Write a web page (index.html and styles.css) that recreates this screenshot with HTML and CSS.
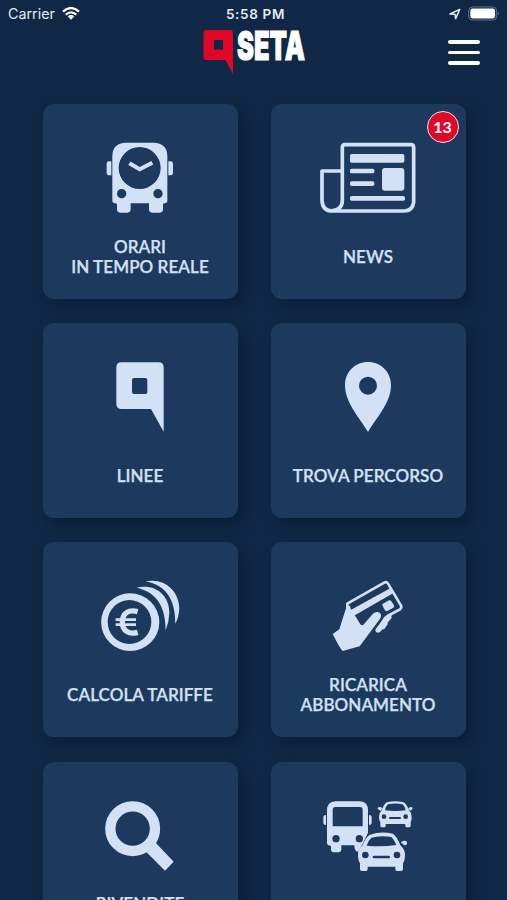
FILE: index.html
```html
<!DOCTYPE html>
<html lang="it">
<head>
<meta charset="utf-8">
<title>SETA</title>
<link rel="stylesheet" href="styles.css">
</head>
<body>
<div class="status">
  <div class="status-left"><span>Carrier</span>
    <svg class="wifi" viewBox="0 0 54 39"><path d="M3 14Q27 -8 51 14M11 23Q27 9 43 23" fill="none" stroke="#fff" stroke-width="6.5"/><path d="M17 28Q27 20 37 28L27 38Z" fill="#fff"/></svg>
  </div>
  <div class="time">5:58 PM</div>
  <div class="status-right">
    <svg class="arrow" viewBox="0 0 36 36"><path d="M3 18L32 4L20 32L18 19Z" fill="none" stroke="#e4eaf2" stroke-width="4.500" stroke-linejoin="round"/></svg>
    <svg class="battery" viewBox="0 0 98 44"><rect x="2" y="2" width="86" height="40" rx="12" fill="none" stroke="#66758c" stroke-width="3"/><rect x="7" y="7" width="76" height="30" rx="7" fill="#fff"/><path d="M92 16q5 6 0 12z" fill="#7d8ba0"/></svg>
  </div>
</div>
<header class="header">
  <svg class="logo" viewBox="0 0 102 46">
    <path fill="#e00726" fill-rule="evenodd" d="M3.5 1H27Q30 1 30 4V45L22.500 31H3.500Q.5 31 .5 28V4Q.5 1 3.500 1ZM11 11V20.500H20V11Z"/>
    <text class="wordmark" x="34" y="30.500" textLength="68" lengthAdjust="spacingAndGlyphs">SETA</text>
  </svg>
  <div class="menu"><i></i><i></i><i></i></div>
</header>
<main class="grid">
  <div class="card">
    <svg class="icon" viewBox="21 117 585 240">
      <path fill-rule="evenodd" d="M266 143H356Q394 146 394 184V318Q394 324 381 326V343Q381 353 371 353H349Q339 353 339 343V325H284V343Q284 353 274 353H253Q243 353 243 343V326Q229 324 229 318V184Q229 146 266 143ZM311 156A63 63 0 1 0 311 282A63 63 0 1 0 311 156ZM257 282A14 14 0 1 0 257 310A14 14 0 1 0 257 282ZM366 282A14 14 0 1 0 366 310A14 14 0 1 0 366 282Z"/>
      <path d="M226 199V241H219Q212 241 212 234V206Q212 199 219 199ZM397 199V241H404Q411 241 411 234V206Q411 199 404 199Z"/>
      <path class="line butt" stroke-width="12" d="M280 205L311 223L349 203"/>
    </svg>
    <div class="label">ORARI<br>IN TEMPO REALE</div>
  </div>
  <div class="card">
    <div class="badge">13</div>
    <svg class="icon" viewBox="27 117 585 240">
      <path class="line" stroke-width="11" d="M241 229V157Q241 149 249 149H447Q455 149 455 157V322Q452 348 427 348H212Q181 348 180 316V228H241V316Q241 344 212 347"/>
      <rect x="264" y="177" width="163" height="26" rx="5"/><rect x="264" y="221" width="73" height="14" rx="5"/><rect x="264" y="259" width="73" height="14" rx="5"/><rect x="360" y="219" width="67" height="68" rx="9"/><rect x="264" y="303" width="165" height="14" rx="5"/>
    </svg>
    <div class="label">NEWS</div>
  </div>
  <div class="card">
    <svg class="icon" viewBox="21 114 585 240"><path fill-rule="evenodd" d="M257 142H367Q383 142 383 158V350L345 282H257Q241 282 241 266V158Q241 142 257 142ZM294 189Q288 189 288 195V231Q288 237 294 237H328Q334 237 334 231V195Q334 189 328 189Z"/></svg>
    <div class="label">LINEE</div>
  </div>
  <div class="card">
    <svg class="icon" viewBox="27 114 585 240"><path fill-rule="evenodd" d="M318 141C279 141 249 171 249 211C249 262 290 305 318 351C346 305 387 262 387 211C387 171 357 141 318 141ZM318 185A27 27 0 1 1 318 239A27 27 0 1 1 318 185Z"/></svg>
    <div class="label">TROVA PERCORSO</div>
  </div>
  <div class="card">
    <svg class="icon" viewBox="21 112 585 240">
      <path fill-rule="evenodd" d="M282 176A86.500 86.500 0 1 0 282 349A88 86.500 0 1 0 282 176ZM280 196A66 66 0 1 1 280 328A65 66 0 1 1 280 196Z"/>
      <path d="M302 159C357 147 400 180 400 235Q399 263 389 287C389 225 369 174 302 159ZM329 140C384 129 430 167 430 223Q428 249 418 267C418 203 397 153 329 140Z"/>
      <path class="line butt" stroke-width="16" d="M305 231C278 223 259 236 259 262C259 288 278 301 305 293"/>
      <path class="line butt" stroke-width="8" d="M239 255H300M239 270H300"/>
    </svg>
    <div class="label">CALCOLA TARIFFE</div>
  </div>
  <div class="card">
    <svg class="icon" viewBox="27 112 585 240">
      <path class="line" stroke-width="8" d="M256 218V207L368 143Q373 140 378 147L417 213Q420 219 414 224L382 241"/>
      <path d="M258 216L380 153L393 176L276 243Z"/>
      <path class="cut" d="M264 210L374 147L382 162L266 226Z"/>
      <path d="M256 208L278 241L296 270L303 272L332 238Q343 228 354 235Q361 244 353 254L293 335L242 349Q234 342 212 298L232 284Z"/>
      <path d="M391 237Q386 244 389 250Q382 257 377 264Q379 270 372 275Q369 285 360 285Q352 298 343 293Q337 286 343 281Q354 267 366 248L377 239Z"/>
      <path d="M361 212Q359 209 363 207L381 197Q385 195 388 200L396 212Q398 216 394 219L376 229Q372 231 369 227Z"/>
    </svg>
    <div class="label">RICARICA<br>ABBONAMENTO</div>
  </div>
  <div class="card">
    <svg class="icon" viewBox="21 125 585 240"><circle cx="290" cy="235" r="67" fill="none" stroke="#d3e1f6" stroke-width="31"/><path d="M331 305L359 277L413 334L387 361Z"/></svg>
    <div class="label">RIVENDITE<br>&nbsp;</div>
  </div>
  <div class="card">
    <svg class="icon" viewBox="27 125 585 240">
      <path fill-rule="evenodd" d="M220 153H294Q318 155 318 180V247L300 285L288 304Q277 304 277 285H238V297Q238 306 229 306H215Q207 306 207 297V287Q195 285 195 278V180Q195 155 220 153ZM220 170Q212 170 212 179V228H302V179Q302 170 294 170ZM222 254A11 11 0 1 0 222 276A11 11 0 1 0 222 254ZM292 254A11 11 0 1 0 292 276A11 11 0 1 0 292 254Z"/>
      <path d="M192 194V224Q184 224 184 218V200Q184 194 192 194ZM321 194V224Q329 224 329 218V200Q329 194 321 194Z"/>
      <path fill-rule="evenodd" d="M324 253Q357 241 393 250Q404 257 416 286Q428 295 429 312Q429 330 423 339V357Q423 362 417 362H405Q400 362 400 357V349H317V357Q317 362 312 362H300Q294 362 294 357V339Q288 330 288 312Q288 295 301 286Q311 260 324 253ZM328 262Q318 271 314 286Q360 291 403 284Q395 266 388 260Q355 254 328 262ZM310 304A10 10 0 1 0 310 324A10 10 0 1 0 310 304ZM405 304A10 10 0 1 0 405 324A10 10 0 1 0 405 304ZM336 316Q332 316 332 320Q332 324 336 324H380Q384 324 384 320Q384 316 380 316Z"/>
      <path d="M416 277Q422 270 432 272Q438 277 433 284L426 285L423 280Z"/>
      <path fill-rule="evenodd" d="M374 156Q400 150 425 156Q434 162 441 180Q449 187 449 200Q449 211 446 216V226Q446 231 441 231H434Q430 231 430 226V221H371V226Q371 231 366 231H359Q355 231 355 226V216Q351 211 351 200Q351 187 359 180Q366 161 374 156ZM378 162Q371 168 369 180Q400 184 431 180Q428 167 422 162Q400 157 378 162ZM366 192A7 7 0 1 0 366 206A7 7 0 1 0 366 192ZM431 192A7 7 0 1 0 431 206A7 7 0 1 0 431 192ZM384 200Q381 200 381 203Q381 206 384 206H414Q417 206 417 203Q417 200 414 200Z"/>
      <path d="M361 174L356 181Q346 178 347 173Q350 168 357 171ZM439 174L444 181Q453 178 452 173Q449 168 443 171Z"/>
    </svg>
  </div>
</main>
</body>
</html>
```
FILE: styles.css
```css
* { box-sizing: border-box; }
html { overflow: hidden; }
body { margin: 0; height: 900px; overflow: hidden; background: #102845; color: #d3e1f6; font-family: Lato, sans-serif; }
.status { height: 28px; padding: 0 7px 1px 8px; display: grid; grid-template-columns: 1fr auto 1fr; align-items: center; font: 14.300px Inter, sans-serif; color: #e4eaf2; }
.status-left, .status-right { display: flex; align-items: center; }
.status-left { gap: 7px; }
.status-right { justify-content: flex-end; gap: 7px; }
.wifi { width: 18px; height: 13px; }
.arrow { width: 12px; height: 12px; }
.battery { width: 32px; height: 15px; }
.time { font-weight: 600; font-size: 13.500px; letter-spacing: .65px; padding-left: 3px; }
.header { height: 76px; padding: 1px 27px 0 203px; display: flex; justify-content: space-between; }
.logo { width: 102px; height: 46px; overflow: visible; }
.wordmark { font: 900 40px Inter, sans-serif; fill: #fff; stroke: #fff; stroke-width: 1px; }
.menu { display: flex; flex-direction: column; gap: 7px; padding-top: 11px; }
.menu i { width: 32px; height: 3.500px; border-radius: 2px; background: #fff; }
.grid { display: grid; grid-template-columns: 195px 195px; grid-auto-rows: 194.500px; gap: 24.700px 33px; padding-left: 42.500px; }
.card { position: relative; padding-top: 30px; border-radius: 11px; background: #1d3a5e; box-shadow: 6px 7px 14px rgba(3, 14, 34, .38); }
.icon { display: block; width: 195px; height: 80px; fill: #d3e1f6; }
.line { fill: none; stroke: #d3e1f6; stroke-linecap: round; stroke-linejoin: round; }
.butt { stroke-linecap: butt; stroke-linejoin: miter; }
.cut { fill: #1d3a5e; }
.label { height: 86px; display: flex; align-items: center; justify-content: center; text-align: center; font-size: 17px; font-weight: 600; line-height: 20.500px; letter-spacing: .06px; -webkit-text-stroke: .25px #d3e1f6; }
.badge { position: absolute; top: 7px; right: 7px; width: 32px; height: 32px; border: 1.500px solid #e6e3ee; border-radius: 50%; background: #e00726; color: #fff; font-size: 16px; font-weight: 700; line-height: 30px; text-align: center; }
```
